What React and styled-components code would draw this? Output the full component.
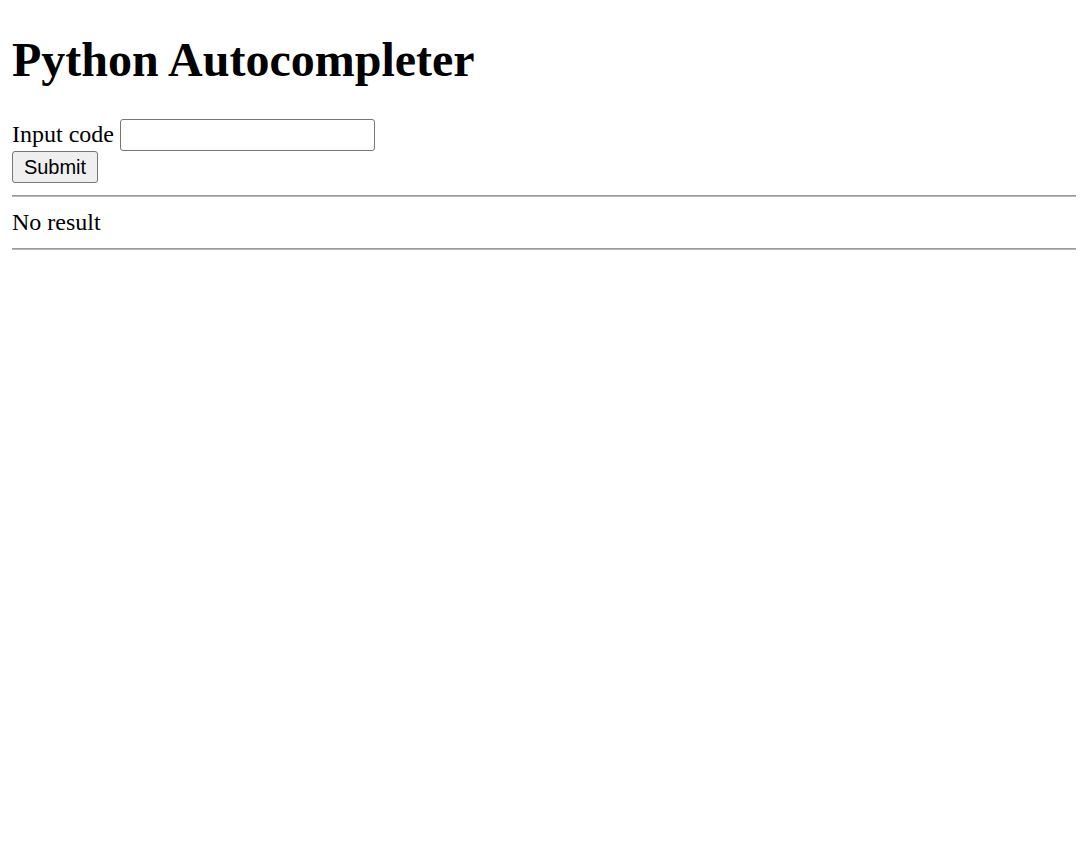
import styled, { createGlobalStyle } from "styled-components";

const GlobalStyle = createGlobalStyle`
    body {
        margin: 12px;
        background: #fff;
        color: #000;
        font-family: "Liberation Serif", "Times New Roman", serif;
        font-size: 24px;
    }
`;

const Title = styled.h1`
    font-size: 48px;
    font-weight: 700;
    margin: 20px 0 32px;
`;

const Form = styled.form`
    margin: 0;
`;

const Label = styled.label`
    font-size: 24px;
`;

const CodeInput = styled.input`
    box-sizing: border-box;
    width: 255px;
    height: 32px;
    margin: 0 0 0 6px;
    padding: 1px 3px;
    font-family: "Liberation Sans", Arial, sans-serif;
    font-size: 20px;
    border: 1px solid #767676;
    border-radius: 3px;
    background: #fff;
    vertical-align: baseline;
`;

const Button = styled.button`
    display: block;
    box-sizing: border-box;
    width: 86px;
    height: 32px;
    margin: 0;
    padding: 0 9px;
    font-family: "Liberation Sans", Arial, sans-serif;
    font-size: 20px;
    color: #000;
    background: #efefef;
    border: 1px solid #767676;
    border-radius: 3px;
`;

const Rule = styled.hr`
    margin: 12px 0;
    height: 0;
    border: none;
    border-top: 1px solid #9a9a9a;
    border-bottom: 1px solid #b8b8b8;
`;

const Result = styled.div`
    line-height: 27px;
`;

const App = () => {
    return (
        <>
            <GlobalStyle />
            <Title>Python Autocompleter</Title>
            <Form onSubmit={(e) => e.preventDefault()}>
                <Label htmlFor="code">Input code</Label>
                <CodeInput id="code" type="text" />
                <Button type="submit">Submit</Button>
            </Form>
            <Rule />
            <Result>No result</Result>
            <Rule />
        </>
    );
};

export default App;
